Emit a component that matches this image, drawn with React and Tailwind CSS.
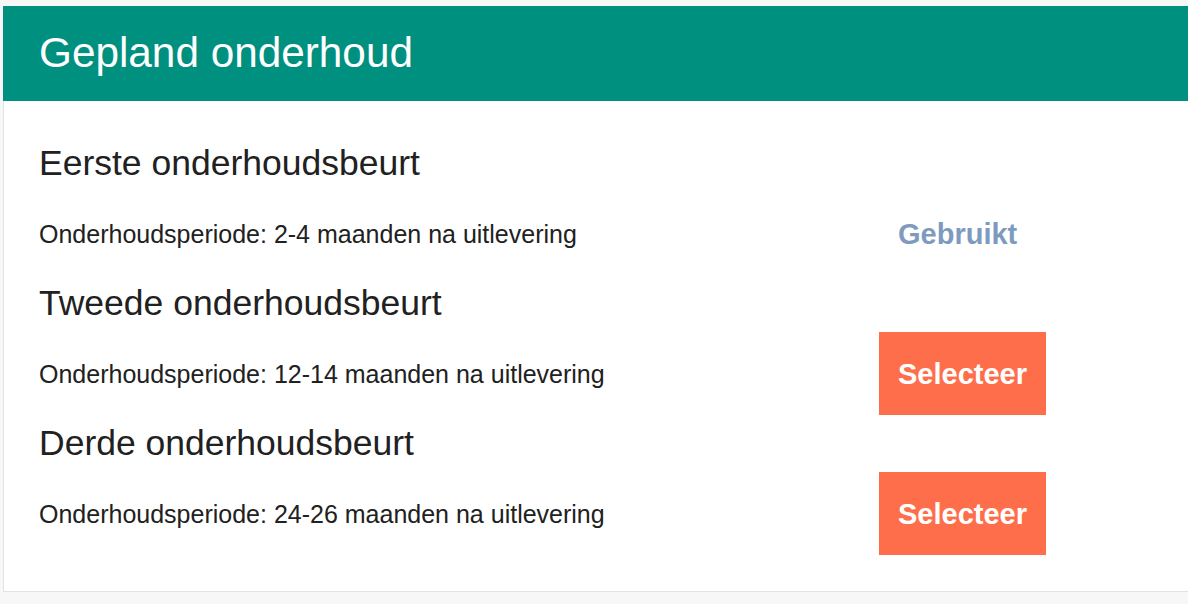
const ITEMS = [
  { title: "Eerste onderhoudsbeurt", period: "2-4 maanden na uitlevering", used: true },
  { title: "Tweede onderhoudsbeurt", period: "12-14 maanden na uitlevering", used: false },
  { title: "Derde onderhoudsbeurt", period: "24-26 maanden na uitlevering", used: false },
];

export default function App() {
  return (
    <div className="min-h-screen bg-[#f7f7f7] pt-[6px] pl-[3px] font-['Liberation_Sans',Arial,sans-serif]">
      <div className="w-[1200px] border border-t-0 border-[#e3e3e3] bg-white">
        <header className="-ml-px flex h-[95px] items-center bg-[#009080] pl-[36px]">
          <h1 className="text-[42.3px] leading-none text-white">Gepland onderhoud</h1>
        </header>

        <div className="px-[35px] pt-[34px] pb-[36px]">
          {ITEMS.map((item) => (
            <MaintenanceItem key={item.title} {...item} />
          ))}
        </div>
      </div>
    </div>
  );
}

function MaintenanceItem({ title, period, used }) {
  return (
    <section>
      <h2 className="text-[35.5px] leading-[57px] text-[#212121]">{title}</h2>
      <div className="flex h-[83px] items-center">
        <p className="w-[840px] pt-[3px] text-[25px] text-[#212121]">Onderhoudsperiode: {period}</p>
        {used ? (
          <span className="flex h-[83px] items-center px-[19px] pt-[3px] text-[29px] font-bold text-[#7f9abf]">
            Gebruikt
          </span>
        ) : (
          <button
            type="button"
            className="h-[83px] bg-[#ff6e4a] px-[19px] pt-[2px] text-[29px] font-bold text-white"
          >
            Selecteer
          </button>
        )}
      </div>
    </section>
  );
}
